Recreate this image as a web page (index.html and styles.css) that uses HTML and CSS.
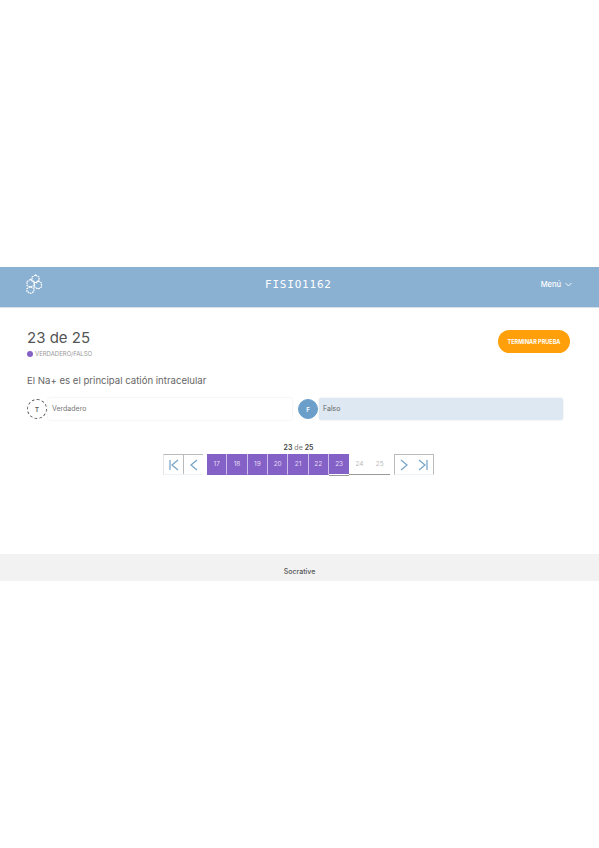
FILE: index.html
```html
<!DOCTYPE html>
<html lang="es">
<head>
  <meta charset="UTF-8">
  <title>FISIO1162</title>
  <link rel="stylesheet" href="styles.css">
</head>
<body>
  <header class="topbar">
    <svg class="logo" width="17" height="20" viewBox="0 0 17 20" fill="none" stroke="#fff" stroke-width="1.200" stroke-dasharray="1.800 0.700">
      <path d="M9.500 1l3.500 2v4l-3.500 2L6 7V3z"/>
      <path d="M4.500 5.500L8 7.500v4l-3.500 2L1 11.500v-4z"/>
      <path d="M12 7l3.500 2v4L12 15l-3.500-2V9z"/>
      <path d="M4.500 12.500L8 14.500v3l-3.500 2L1 17.500v-3z"/>
    </svg>
    <div class="room">FISIO1162</div>
    <div class="menu">Menú
      <svg width="7" height="5" viewBox="0 0 7 5" fill="none" stroke="#fff" stroke-width="0.900"><path d="M0.500 1l3 3 3-3"/></svg>
    </div>
  </header>

  <main class="quiz">
    <div class="quiz-head">
      <div>
        <h1>23 de 25</h1>
        <div class="qtype"><span class="dot"></span>VERDADERO/FALSO</div>
      </div>
      <button class="finish">TERMINAR PRUEBA</button>
    </div>

    <p class="question">El Na+ es el principal catión intracelular</p>

    <div class="answers">
      <div class="answer">
        <span class="letter">T</span>
        <div class="answer-box">Verdadero</div>
      </div>
      <div class="answer selected">
        <span class="letter">F</span>
        <div class="answer-box">Falso</div>
      </div>
    </div>

    <div class="pager-label"><b>23</b> de <b>25</b></div>
    <nav class="pager">
      <div class="arrows prev">
        <span class="arrow"><svg width="12" height="12" viewBox="0 0 12 12" fill="none" stroke="#7ba7c9" stroke-width="1.300"><path d="M2 1v10M10 1L4 6l6 5"/></svg></span>
        <span class="arrow"><svg width="12" height="12" viewBox="0 0 12 12" fill="none" stroke="#7ba7c9" stroke-width="1.300"><path d="M9 1L3 6l6 5"/></svg></span>
      </div>
      <div class="pages">
        <span class="page done">17</span>
        <span class="page done">18</span>
        <span class="page done">19</span>
        <span class="page done">20</span>
        <span class="page done">21</span>
        <span class="page done">22</span>
        <span class="page done current">23</span>
        <span class="page todo">24</span>
        <span class="page todo">25</span>
      </div>
      <div class="arrows next">
        <span class="arrow"><svg width="12" height="12" viewBox="0 0 12 12" fill="none" stroke="#7ba7c9" stroke-width="1.300"><path d="M3 1l6 5-6 5"/></svg></span>
        <span class="arrow"><svg width="12" height="12" viewBox="0 0 12 12" fill="none" stroke="#7ba7c9" stroke-width="1.300"><path d="M2 1l6 5-6 5M10 1v10"/></svg></span>
      </div>
    </nav>
  </main>

  <footer class="foot">Socrative</footer>
</body>
</html>
```

FILE: styles.css
```css
body { margin: 0; padding-top: 267px; font-family: "Inter", "Liberation Sans", sans-serif; color: #555; background: #fff; }

.topbar {
  height: 34px;
  display: flex;
  align-items: center;
  justify-content: space-between;
  padding: 0 27px 6px 26px;
  background: #8ab0d2;
  border-bottom: 1px solid #d5e0ea;
  color: #fff;
}
.logo { flex: none; }
.room { font-family: "DejaVu Sans Mono", monospace; font-size: 11px; letter-spacing: 0.800px; margin-left: 13px; }
.menu { font-size: 7.500px; font-weight: 500; display: flex; align-items: center; gap: 4px; }

.quiz { height: 246px; padding: 0 29px 0 27px; }
.quiz-head { display: flex; justify-content: space-between; align-items: flex-start; padding-top: 21px; }
h1 { margin: 0; font-size: 15px; font-weight: 400; line-height: 17px; color: #555; }
.qtype { display: flex; align-items: center; gap: 2px; margin-top: 4px; font-size: 6px; line-height: 8px; color: #999; }
.dot { width: 6px; height: 6px; border-radius: 50%; background: #8461c6; }
.finish {
  width: 72px;
  height: 23px;
  margin-top: 1px;
  border: none;
  border-radius: 12px;
  padding: 0;
  background: #ff9f0a;
  color: #fff;
  font-family: inherit;
  font-size: 5.500px;
  font-weight: 700;
}

.question { margin: 16px 0 0; font-size: 9.600px; line-height: 14px; color: #666; }

.answers { display: flex; gap: 6px; margin: 10px 7px 0 0; }
.answer { flex: 1; display: flex; align-items: center; gap: 1px; }
.letter {
  flex: none;
  box-sizing: border-box;
  width: 20px;
  height: 20px;
  border: 1px dashed #555;
  border-radius: 50%;
  display: flex;
  align-items: center;
  justify-content: center;
  font-size: 6px;
  font-weight: 600;
}
.answer-box {
  flex: 1;
  height: 22px;
  line-height: 22px;
  padding-left: 4px;
  font-size: 7px;
  color: #777;
  border-radius: 2px;
  box-shadow: 0 0 2px rgba(0, 0, 0, 0.12);
}
.selected .letter { border: 1px solid #6b9fca; background: #6b9fca; color: #fff; }
.selected .answer-box { background: #dde8f2; color: #666; }

.pager-label { margin-top: 23px; text-align: center; font-size: 7px; line-height: 9px; color: #777; }
.pager-label b { font-weight: 600; color: #444; }
.pager { display: flex; justify-content: center; gap: 4px; margin-top: 2px; }
.arrows { box-sizing: border-box; width: 40px; display: flex; border-top: 1px solid #bbb; border-bottom: 1px solid #eef3f7; }
.arrows.prev { border-left: 1px solid #e4e4e4; }
.arrows.prev .arrow:first-child { border-right: 1px solid #bbb; }
.arrows.next { border-left: 1px solid #bbb; border-right: 1px solid #bbb; }
.arrow {
  box-sizing: border-box;
  flex: 1;
  height: 19px;
  display: flex;
  align-items: center;
  justify-content: center;
}
.pages { display: flex; }
.page {
  box-sizing: border-box;
  width: 20.330px;
  height: 21px;
  display: flex;
  align-items: center;
  justify-content: center;
  font-size: 6.500px;
  border-bottom: 1px solid #999;
}
.done { background: #8461c6; color: #e6def5; border-right: 1px solid #cdbfe9; border-bottom-color: transparent; }
.current { border-right: none; border-bottom: 1px solid #fff; box-shadow: 0 1px 0 #999; }
.todo { color: #bbb; }

.foot { height: 27px; line-height: 35px; background: #f2f2f2; text-align: center; font-size: 7px; font-weight: 500; color: #555; }
```
